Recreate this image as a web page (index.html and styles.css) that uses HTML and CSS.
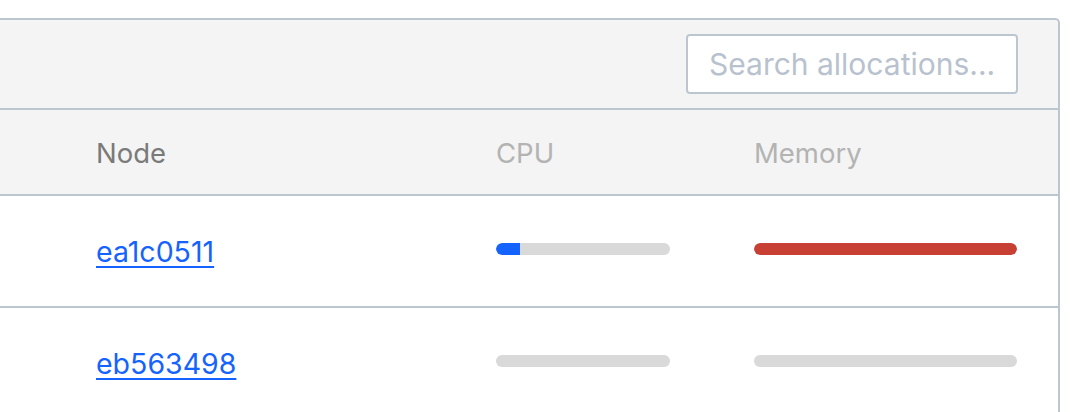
FILE: index.html
```html
<!DOCTYPE html>
<html>
<head>
<meta charset="utf-8">
<link rel="stylesheet" href="styles.css">
</head>
<body>
<div class="card">
  <div class="toolbar">
    <input class="search" type="text" placeholder="Search allocations...">
  </div>
  <div class="row head">
    <div></div>
    <div class="th active">Node</div>
    <div class="th">CPU</div>
    <div class="th">Memory</div>
  </div>
  <div class="row">
    <div></div>
    <div><a class="link" href="#">ea1c0511</a></div>
    <div><div class="bar cpu"><div class="fill blue" style="width:14%"></div></div></div>
    <div><div class="bar mem"><div class="fill red" style="width:100%"></div></div></div>
  </div>
  <div class="row">
    <div></div>
    <div><a class="link" href="#">eb563498</a></div>
    <div><div class="bar cpu"><div class="fill blue" style="width:0%"></div></div></div>
    <div><div class="bar mem"><div class="fill red" style="width:0%"></div></div></div>
  </div>
</div>
</body>
</html>
```
FILE: styles.css
```css
html, body {
  margin: 0;
  padding: 0;
  background: #ffffff;
  font-family: Inter, "Liberation Sans", sans-serif;
  overflow: hidden;
}
.card {
  margin-top: 18px;
  width: 1058px;
  border-top: 2px solid #bcc6d1;
  border-right: 2px solid #bcc6d1;
  border-top-right-radius: 5px;
  background: #ffffff;
}
.toolbar {
  background: #f4f4f4;
  border-bottom: 2px solid #bcc6d1;
  border-top-right-radius: 4px;
  display: flex;
  justify-content: flex-end;
  padding: 14px 40px 14px 0;
}
.search {
  box-sizing: border-box;
  width: 332px;
  height: 60px;
  border: 2px solid #bcc6d1;
  border-radius: 4px;
  background: #ffffff;
  padding: 0 21px;
  font-family: inherit;
  font-size: 30px;
  color: #333;
  outline: none;
}
.search::placeholder {
  color: #b8c2ce;
}
.row {
  display: grid;
  grid-template-columns: 96px 400px 258px 264px;
  align-items: center;
  height: 110px;
  border-bottom: 2px solid #bcc6d1;
}
.row.head {
  height: 84px;
  background: #f4f4f4;
}
.th {
  font-size: 27.5px;
  color: #b3b3b3;
  padding-top: 2px;
}
.th.active {
  color: #7a7a7a;
}
.link {
  font-size: 28.5px;
  color: #1563ff;
  text-decoration: underline;
  text-underline-offset: 4px;
  text-decoration-thickness: 2px;
}
.bar {
  height: 12px;
  border-radius: 6px;
  background: #d9d9d9;
  overflow: hidden;
  margin-top: -4px;
}
.bar.cpu { width: 174px; }
.bar.mem { width: 263px; }
.fill { height: 100%; border-radius: 6px 0 0 6px; }
.fill.blue { background: #1563ff; }
.fill.red { background: #c84034; border-radius: 6px; }
```
